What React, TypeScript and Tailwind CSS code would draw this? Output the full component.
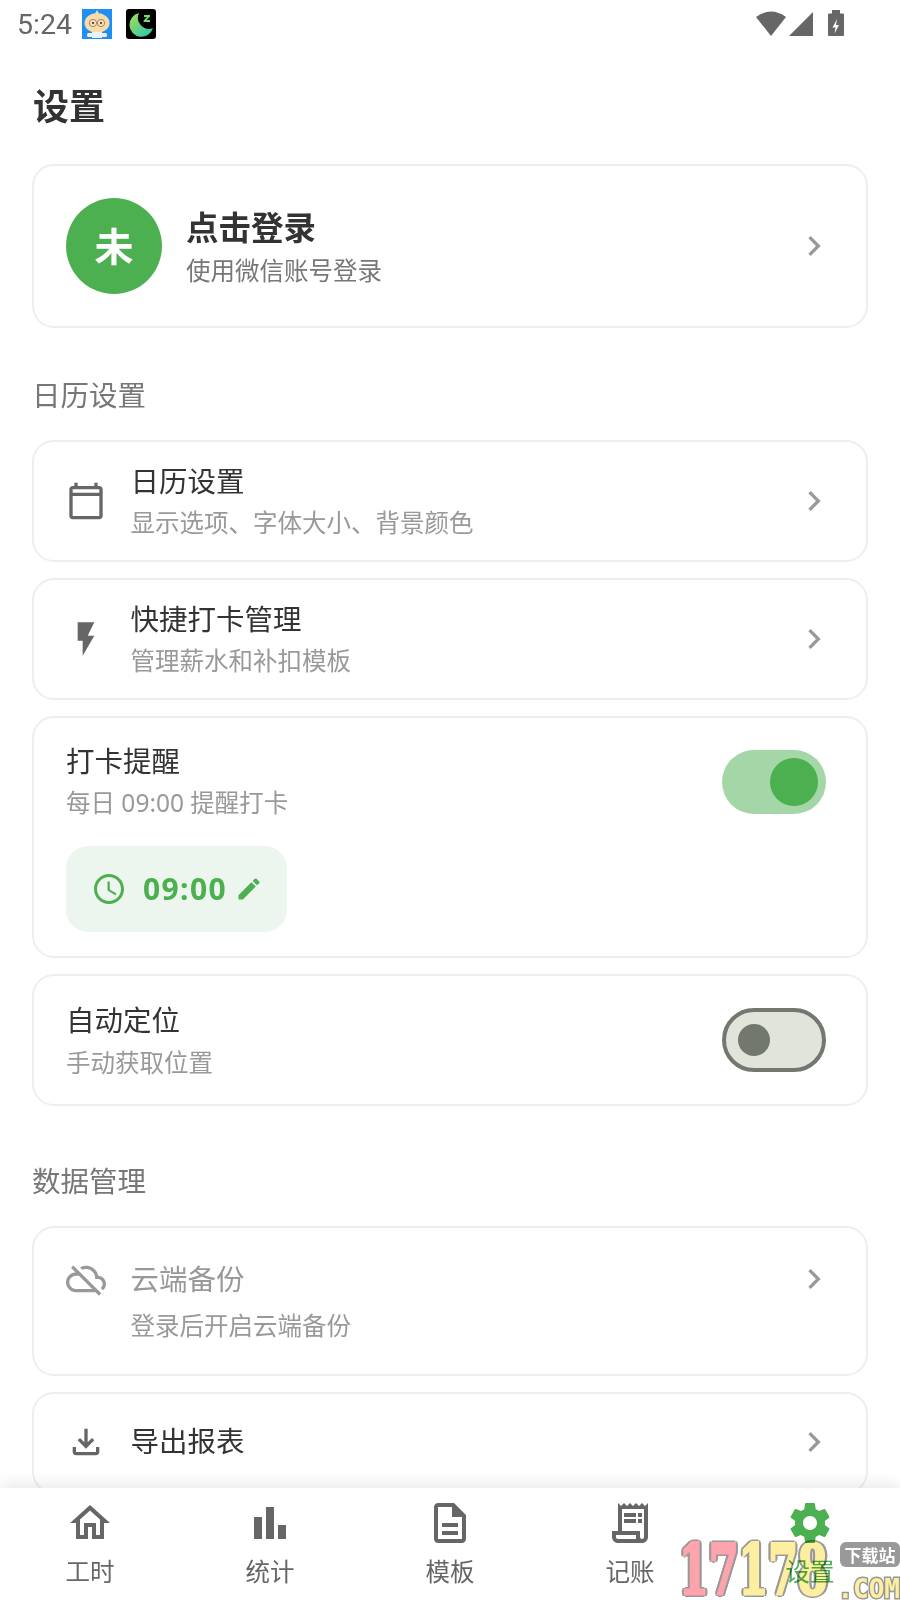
const CJK = "font-['Noto_Sans','Noto_Sans_CJK_SC',sans-serif]";

function Icon({ d, size = 40, color = "#666666", className = "" }: { d: string; size?: number; color?: string; className?: string }) {
  return (
    <svg width={size} height={size} viewBox="0 0 24 24" fill={color} fillRule="evenodd" className={"shrink-0 " + className}>
      <path d={d} />
    </svg>
  );
}

const P = {
  chevron: "M10 6L8.59 7.41 13.17 12l-4.58 4.59L10 18l6-6z",
  calendar: "M20 3h-1V1h-2v2H7V1H5v2H4c-1.1 0-2 .9-2 2v16c0 1.1.9 2 2 2h16c1.1 0 2-.9 2-2V5c0-1.1-.9-2-2-2zM4 5h16v2H4zm0 4h16v12H4z",
  bolt: "M7 2v11h3v9l7-12h-4l4-8z",
  cloudOff: "M24 15c0-2.64-2.05-4.78-4.65-4.96C18.67 6.59 15.64 4 12 4c-1.33 0-2.57.36-3.65.97l1.49 1.49C10.51 6.17 11.23 6 12 6c3.04 0 5.5 2.46 5.5 5.5v.5H19c1.66 0 3 1.34 3 3 0 .99-.48 1.85-1.21 2.4l1.41 1.41c1.09-.92 1.8-2.27 1.8-3.81zM4.41 3.86L3 5.27l2.77 2.77h-.42C2.34 8.36 0 10.91 0 14c0 3.31 2.69 6 6 6h11.73l2 2 1.41-1.41L4.41 3.86zM6 18c-2.21 0-4-1.79-4-4s1.79-4 4-4h1.73l8 8H6z",
  download: "M18 15v3H6v-3H4v3c0 1.1.9 2 2 2h12c1.1 0 2-.9 2-2v-3h-2zm-1-4l-1.41-1.41L13 12.17V4h-2v8.17L8.41 9.59 7 11l5 5 5-5z",
  clock: "M11.99 2C6.47 2 2 6.48 2 12s4.47 10 9.99 10C17.52 22 22 17.52 22 12S17.52 2 11.99 2zM12 20c-4.42 0-8-3.58-8-8s3.58-8 8-8 8 3.58 8 8-3.58 8-8 8zm.5-13H11v6l5.25 3.15.75-1.23-4.5-2.67z",
  edit: "M3 17.25V21h3.75L17.81 9.94l-3.75-3.75L3 17.25zM20.71 7.04c.39-.39.39-1.02 0-1.41l-2.34-2.34c-.39-.39-1.02-.39-1.41 0l-1.83 1.83 3.75 3.75 1.83-1.83z",
  home: "M12 5.69l5 4.5V18h-2v-6H9v6H7v-7.81l5-4.5M12 3L2 12h3v8h6v-6h2v6h6v-8h3L12 3z",
  bars: "M4 9h4v11H4zm12 4h4v7h-4zm-6-9h4v16h-4z",
  doc: "M8 16h8v2H8zm0-4h8v2H8zm6-10H6c-1.1 0-2 .9-2 2v16c0 1.1.89 2 1.99 2H18c1.1 0 2-.9 2-2V8l-6-6zm4 18H6V4h7v5h5v11z",
  receipt: "M19.5 3.5L18 2l-1.5 1.5L15 2l-1.5 1.5L12 2l-1.5 1.5L9 2 7.5 3.5 6 2v14H3v3c0 1.66 1.34 3 3 3h12c1.66 0 3-1.34 3-3V2l-1.5 1.5zM15 20H6c-.55 0-1-.45-1-1v-1h10v2zm4-1c0 .55-.45 1-1 1s-1-.45-1-1v-3H8V5h11v14zM9 7h6v2H9zm7 0h2v2h-2zm-7 3h6v2H9zm7 0h2v2h-2z",
  gear: "M19.43 12.98c.04-.32.07-.64.07-.98s-.03-.66-.07-.98l2.11-1.65c.19-.15.24-.42.12-.64l-2-3.46c-.12-.22-.39-.3-.61-.22l-2.49 1c-.52-.4-1.08-.73-1.69-.98l-.38-2.65C14.46 2.18 14.25 2 14 2h-4c-.25 0-.46.18-.49.42l-.38 2.65c-.61.25-1.17.59-1.69.98l-2.49-1c-.23-.09-.49 0-.61.22l-2 3.46c-.13.22-.07.49.12.64l2.11 1.65c-.04.32-.07.65-.07.98s.03.66.07.98l-2.11 1.65c-.19.15-.24.42-.12.64l2 3.46c.12.22.39.3.61.22l2.49-1c.52.4 1.08.73 1.69.98l.38 2.65c.03.24.24.42.49.42h4c.25 0 .46-.18.49-.42l.38-2.65c.61-.25 1.17-.59 1.69-.98l2.49 1c.23.09.49 0 .61-.22l2-3.46c.12-.22.07-.49-.12-.64l-2.11-1.65zM12 15.5c-1.93 0-3.5-1.57-3.5-3.5s1.57-3.5 3.5-3.5 3.5 1.57 3.5 3.5-1.57 3.5-3.5 3.5z",
};

function Chevron() {
  return <Icon d={P.chevron} color="#999999" />;
}

function Card({ children, className = "" }: { children: React.ReactNode; className?: string }) {
  return <div className={"border-2 border-[#eeeeee] rounded-[22px] bg-white shrink-0 " + className}>{children}</div>;
}

function Row({ icon, title, sub }: { icon: string; title: string; sub: string }) {
  return (
    <Card className="flex items-center pl-[32px] pr-[32px] pt-[19px] pb-[20px]">
      <Icon d={icon} />
      <div className="flex-1 ml-[24.5px]">
        <div className="text-[28.5px] leading-[40px] text-[#333333]">{title}</div>
        <div className="text-[24.5px] leading-[34px] mt-[5px] text-[#999999]">{sub}</div>
      </div>
      <Chevron />
    </Card>
  );
}

function Toggle({ on }: { on: boolean }) {
  return on ? (
    <div className="w-[104px] h-[64px] rounded-full bg-[#a5d6a7] flex items-center justify-end pr-[8px] shrink-0">
      <div className="w-[48px] h-[48px] rounded-full bg-[#4caf50]" />
    </div>
  ) : (
    <div className="w-[104px] h-[64px] rounded-full bg-[#e0e4da] border-[4px] border-[#72786f] flex items-center pl-[12px] shrink-0">
      <div className="w-[32px] h-[32px] rounded-full bg-[#72786f]" />
    </div>
  );
}

function NavItem({ icon, label, active }: { icon: string; label: string; active?: boolean }) {
  return (
    <div className="flex flex-col items-center">
      <Icon d={icon} size={48} color={active ? "#4caf50" : "#666666"} />
      <div className={"text-[24.5px] leading-[34px] mt-[8px] " + (active ? "text-[#4caf50]" : "text-[#666666]")}>{label}</div>
    </div>
  );
}

function AppIconBao() {
  return (
    <svg width="30" height="30" viewBox="0 0 30 30" className="shrink-0">
      <rect width="30" height="30" fill="#1e8ff5" />
      <ellipse cx="15" cy="14" rx="12.5" ry="10" fill="#f8dca8" />
      <path d="M15 1c1 2 2 3 2 5h-4c0-2 1-3 2-5z" fill="#f8dca8" />
      <circle cx="11" cy="14" r="3.6" fill="#fbe7c4" stroke="#8a6a48" strokeWidth="0.8" />
      <circle cx="19" cy="14" r="3.6" fill="#fbe7c4" stroke="#8a6a48" strokeWidth="0.8" />
      <circle cx="11" cy="14" r="1.2" fill="#6a4a30" />
      <circle cx="19" cy="14" r="1.2" fill="#6a4a30" />
      <rect x="5" y="24" width="20" height="4" rx="1.5" fill="#fdebc8" />
      <rect x="10" y="23" width="10" height="6" fill="#e8f4fd" />
    </svg>
  );
}

function AppIconMoon() {
  return (
    <svg width="30" height="30" viewBox="0 0 30 30" className="shrink-0">
      <defs>
        <linearGradient id="moonG" x1="0" y1="0" x2="1" y2="1">
          <stop offset="0" stopColor="#a6e04f" />
          <stop offset="1" stopColor="#22c4b8" />
        </linearGradient>
      </defs>
      <rect width="30" height="30" rx="3" fill="#000000" />
      <path d="M13 4A12 12 0 1 0 27 19 A11 11 0 0 1 13 4z" fill="url(#moonG)" />
      <path d="M18 6h6v1.6l-3.4 3.4H24v2h-6.4v-1.6L21 8h-3z" fill="#6ce06a" />
    </svg>
  );
}

function Watermark() {
  return (
    <div className="absolute right-0 bottom-0 w-[224px] h-[60px] pointer-events-none select-none mix-blend-multiply">
      <div className="absolute left-[3px] top-0 flex origin-left scale-x-[0.61] text-[70px] leading-[60px] font-bold font-['DejaVu_Serif',serif] [text-shadow:5px_0_#999999,-5px_0_#999999,0_3px_#999999,0_-3px_#999999,4px_2px_#999999,-4px_2px_#999999,4px_-2px_#999999,-4px_-2px_#999999]">
        <span className="text-[#ffa4ac] [-webkit-text-stroke:3px_#ffa4ac]">17</span>
        <span className="text-[#fdeea0] [-webkit-text-stroke:3px_#fdeea0]">178</span>
      </div>
      <div className="absolute right-0 top-[2px] w-[60px] h-[25px] rounded-[6px] bg-[#999999] text-white text-[17px] leading-[25px] font-bold text-center font-['Noto_Sans_CJK_SC',sans-serif]">
        下载站
      </div>
      <div className="absolute right-0 top-[38px] text-[26px] leading-[22px] font-bold font-['DejaVu_Sans_Mono',monospace] text-[#fdeea0] [-webkit-text-stroke:3px_#999999] [paint-order:stroke_fill]">
        .COM
      </div>
    </div>
  );
}

export default function App() {
  return (
    <div className={"relative w-[900px] h-[1600px] bg-white overflow-hidden flex flex-col " + CJK}>
      <div className="h-[50px] shrink-0 flex items-start pl-[17px] pr-[56px] pt-[9px]">
        <span className="text-[28.5px] leading-[32px] text-[#666666] font-['Roboto',sans-serif]">5:24</span>
        <div className="ml-[10px]"><AppIconBao /></div>
        <div className="ml-[14px]"><AppIconMoon /></div>
        <div className="flex-1" />
        <svg width="88" height="28" viewBox="0 0 88 28" fill="#666666" className="shrink-0 mt-[1px]">
          <path d="M15 26L0 7Q15-4 30 7z" />
          <path d="M33 26L57 2v24z" />
          <path d="M72 4.500q0-1 1-1h3V0h8v3.500h3q1 0 1 1V25q0 1-1 1H73q-1 0-1-1z" />
          <path d="M81 9l-4.500 8.500h3l-1 6 4.500-8.500h-3z" fill="#ffffff" />
        </svg>
      </div>

      <div className="flex-1 min-h-0 overflow-hidden px-[32px]">
        <h1 className="text-[36px] leading-[50px] font-bold text-[#333333] mt-[32px] mb-[32px] ml-[1px]">设置</h1>

        <Card className="flex items-center h-[164px] pl-[32px] pr-[32px]">
          <div className="w-[96px] h-[96px] rounded-full bg-[#4caf50] flex items-center justify-center text-white text-[39px] font-bold shrink-0">未</div>
          <div className="flex-1 ml-[24px] pt-[4px]">
            <div className="text-[32.5px] leading-[44px] font-bold text-[#333333]">点击登录</div>
            <div className="text-[24.5px] leading-[40px] mt-[1px] text-[#777777]">使用微信账号登录</div>
          </div>
          <Chevron />
        </Card>

        <div className="text-[28.5px] leading-[40px] text-[#777777] mt-[47px] mb-[25px]">日历设置</div>

        <div className="flex flex-col gap-[16px]">
          <Row icon={P.calendar} title="日历设置" sub="显示选项、字体大小、背景颜色" />
          <Row icon={P.bolt} title="快捷打卡管理" sub="管理薪水和补扣模板" />

          <Card className="pl-[32px] pr-[40px] pt-[23px] pb-[24px]">
            <div className="flex items-start justify-between">
              <div>
                <div className="text-[28.5px] leading-[40px] text-[#333333]">打卡提醒</div>
                <div className="text-[24.5px] leading-[34px] mt-[5px] text-[#999999]">每日 09:00 提醒打卡</div>
              </div>
              <div className="mt-[9px]"><Toggle on /></div>
            </div>
            <div className="mt-[26px] w-[221px] h-[86px] rounded-[22px] bg-[#edf6ee] flex items-center pl-[25px]">
              <Icon d={P.clock} size={36} color="#4caf50" />
              <span className="ml-[16px] text-[30px] leading-[40px] font-bold text-[#4caf50] tracking-[1.4px]">09:00</span>
              <Icon d={P.edit} size={28} color="#4caf50" className="ml-[8px]" />
            </div>
          </Card>

          <Card className="flex items-center justify-between pl-[32px] pr-[40px] pt-[24px] pb-[24px]">
            <div>
              <div className="text-[28.5px] leading-[40px] text-[#333333]">自动定位</div>
              <div className="text-[24.5px] leading-[34px] mt-[6px] text-[#999999]">手动获取位置</div>
            </div>
            <Toggle on={false} />
          </Card>
        </div>

        <div className="text-[28.5px] leading-[40px] text-[#777777] mt-[55px] mb-[25px]">数据管理</div>

        <div className="flex flex-col gap-[16px]">
          <Card className="pl-[32px] pr-[32px] pt-[31px] pb-[31px]">
            <div className="flex items-center">
              <Icon d={P.cloudOff} color="#999999" />
              <div className="flex-1 ml-[24.5px] text-[28.5px] leading-[40px] text-[#999999]">云端备份</div>
              <Chevron />
            </div>
            <div className="ml-[64.5px] mt-[10px] text-[24.5px] leading-[34px] text-[#999999]">登录后开启云端备份</div>
          </Card>

          <Card className="flex items-center pl-[32px] pr-[32px] pt-[27px] pb-[29px]">
            <Icon d={P.download} />
            <div className="flex-1 ml-[24.5px] mb-[2px] text-[28.5px] leading-[40px] text-[#333333]">导出报表</div>
            <Chevron />
          </Card>
        </div>
      </div>

      <nav className="relative h-[112px] shrink-0 bg-white shadow-[0_-4px_14px_rgba(0,0,0,0.09)] grid grid-cols-5 pt-[11px]">
        <NavItem icon={P.home} label="工时" />
        <NavItem icon={P.bars} label="统计" />
        <NavItem icon={P.doc} label="模板" />
        <NavItem icon={P.receipt} label="记账" />
        <NavItem icon={P.gear} label="设置" active />
        <Watermark />
      </nav>
    </div>
  );
}
